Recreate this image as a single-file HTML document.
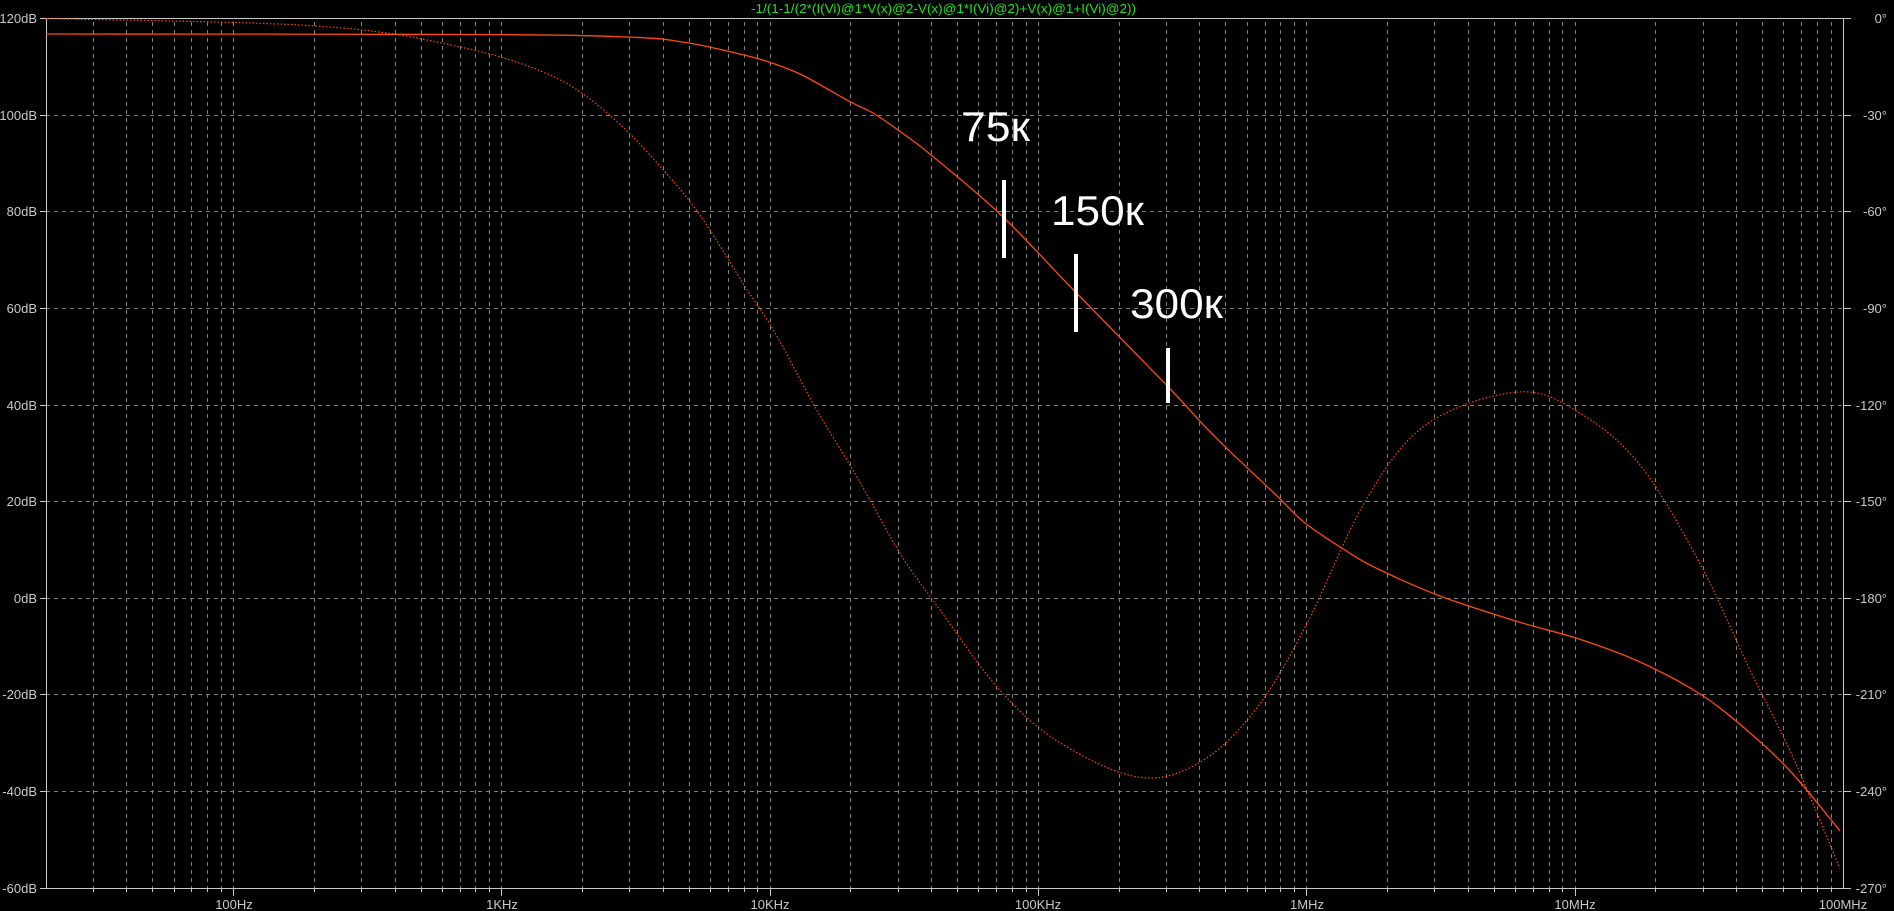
<!DOCTYPE html>
<html><head><meta charset="utf-8"><style>
html,body{margin:0;padding:0;background:#000;width:1894px;height:911px;overflow:hidden}
svg{display:block}
.l{font-family:"Liberation Sans",sans-serif;font-size:13px;fill:#c8c8c8}
.m{font-family:"Liberation Sans","DejaVu Sans",sans-serif;font-size:42px;fill:#fff}
</style></head><body>
<svg width="1894" height="911" viewBox="0 0 1894 911">
<g stroke="#808080" stroke-width="1" stroke-dasharray="4,4" fill="none" shape-rendering="crispEdges">
<path d="M93.5 22V888M126.5 22V888M152.5 22V888M174.5 22V888M191.5 22V888M207.5 22V888M221.5 22V888M233.5 22V888
M314.5 22V888M361.5 22V888M395.5 22V888M421.5 22V888M442.5 22V888M460.5 22V888M475.5 22V888M489.5 22V888M501.5 22V888
M582.5 22V888M629.5 22V888M663.5 22V888M689.5 22V888M710.5 22V888M728.5 22V888M744.5 22V888M757.5 22V888M770.5 22V888
M850.5 22V888M898.5 22V888M931.5 22V888M957.5 22V888M978.5 22V888M996.5 22V888M1012.5 22V888M1026.5 22V888M1038.5 22V888
M1119.5 22V888M1166.5 22V888M1199.5 22V888M1225.5 22V888M1247.5 22V888M1265.5 22V888M1280.5 22V888M1294.5 22V888M1306.5 22V888
M1387.5 22V888M1434.5 22V888M1468.5 22V888M1494.5 22V888M1515.5 22V888M1533.5 22V888M1549.5 22V888M1562.5 22V888M1575.5 22V888
M1655.5 22V888M1703.5 22V888M1736.5 22V888M1762.5 22V888M1783.5 22V888M1801.5 22V888M1817.5 22V888M1831.5 22V888"/>
<path d="M46 115.5H1843M46 211.5H1843M46 308.5H1843M46 405.5H1843M46 501.5H1843M46 598.5H1843M46 694.5H1843M46 791.5H1843"/>
</g>
<g stroke="#c8c8c8" stroke-width="1" fill="none" shape-rendering="crispEdges">
<path d="M40 18.5H1851M40 888.5H1851M46.5 18V888M1843.5 18V888"/>
<path d="M40 115.5H46M40 211.5H46M40 308.5H46M40 405.5H46M40 501.5H46M40 598.5H46M40 694.5H46M40 791.5H46"/>
<path d="M1843 115.5H1851M1843 211.5H1851M1843 308.5H1851M1843 405.5H1851M1843 501.5H1851M1843 598.5H1851M1843 694.5H1851M1843 791.5H1851"/>
<path d="M93.5 888V892M126.5 888V892M152.5 888V892M174.5 888V892M191.5 888V892M207.5 888V892M221.5 888V892M233.5 888V896
M314.5 888V892M361.5 888V892M395.5 888V892M421.5 888V892M442.5 888V892M460.5 888V892M475.5 888V892M489.5 888V892M501.5 888V896
M582.5 888V892M629.5 888V892M663.5 888V892M689.5 888V892M710.5 888V892M728.5 888V892M744.5 888V892M757.5 888V892M770.5 888V896
M850.5 888V892M898.5 888V892M931.5 888V892M957.5 888V892M978.5 888V892M996.5 888V892M1012.5 888V892M1026.5 888V892M1038.5 888V896
M1119.5 888V892M1166.5 888V892M1199.5 888V892M1225.5 888V892M1247.5 888V892M1265.5 888V892M1280.5 888V892M1294.5 888V892M1306.5 888V896
M1387.5 888V892M1434.5 888V892M1468.5 888V892M1494.5 888V892M1515.5 888V892M1533.5 888V892M1549.5 888V892M1562.5 888V892M1575.5 888V896
M1655.5 888V892M1703.5 888V892M1736.5 888V892M1762.5 888V892M1783.5 888V892M1801.5 888V892M1817.5 888V892M1831.5 888V892"/>
</g>
<g class="l" text-anchor="end">
<text x="37" y="23">120dB</text><text x="37" y="120">100dB</text><text x="37" y="216">80dB</text><text x="37" y="313">60dB</text>
<text x="37" y="410">40dB</text><text x="37" y="506">20dB</text><text x="37" y="603">0dB</text><text x="37" y="699">-20dB</text>
<text x="37" y="796">-40dB</text><text x="37" y="893">-60dB</text>
<text x="1887" y="23">0°</text><text x="1887" y="120">-30°</text><text x="1887" y="216">-60°</text><text x="1887" y="313">-90°</text>
<text x="1887" y="410">-120°</text><text x="1887" y="506">-150°</text><text x="1887" y="603">-180°</text><text x="1887" y="699">-210°</text>
<text x="1887" y="796">-240°</text><text x="1887" y="893">-270°</text>
</g>
<g class="l" text-anchor="middle">
<text x="234" y="909">100Hz</text><text x="502" y="909">1KHz</text><text x="770" y="909">10KHz</text><text x="1038" y="909">100KHz</text>
<text x="1307" y="909">1MHz</text><text x="1575" y="909">10MHz</text><text x="1843" y="909">100MHz</text>
</g>
<text x="751" y="13" textLength="385" lengthAdjust="spacingAndGlyphs" style="font-family:'Liberation Sans',sans-serif;font-size:13px;fill:#22e022">-1/(1-1/(2*(I(Vi)@1*V(x)@2-V(x)@1*I(Vi)@2)+V(x)@1+I(Vi)@2))</text>
<path id="mag" fill="none" stroke="#ff4a10" stroke-width="1.3" d="M46 34L480 34.5L627 37L685 42.4L744 55L771 62.7L803 75.5L850 101.7L873 113L903 133.6L932 155.7L1001 215L1074 290.5L1165 383.5L1214 435.8L1275 494L1305 523L1348 552L1378 569L1439 595.6L1518 621.7L1579 639L1640 662L1700 694L1749 732L1792 773L1840 831"/>
<path id="ph" fill="none" stroke="#ff4a10" stroke-width="1.2" stroke-dasharray="1.5,2" d="M46 18.6L216 22L316 26L392 33.7L451 45L504 58L551 75.5L586 96L627 131L662 168.5L691 203L715 238L744 285L774 331L815 407L850 465L873 505.5L903 558L940 610L1001 691.5L1062 744L1141 777.5L1202 761L1256 709L1305 627.5L1366 500L1427 424L1518 392L1579 412.5L1640 465L1700 563.6L1749 668L1792 755L1840 868.7"/>
<g fill="#fff">
<rect x="1002" y="180" width="4" height="78"/>
<rect x="1074" y="254" width="4" height="78"/>
<rect x="1166" y="348" width="4" height="55"/>
</g>
<text class="m" x="961" y="141" textLength="69" lengthAdjust="spacingAndGlyphs">75к</text>
<text class="m" x="1051" y="225" textLength="93" lengthAdjust="spacingAndGlyphs">150к</text>
<text class="m" x="1130" y="318" textLength="93" lengthAdjust="spacingAndGlyphs">300к</text>
</svg>
<script>
function smooth(id){
  var el=document.getElementById(id);
  var nums=el.getAttribute('d').replace(/[ML]/g,' ').trim().split(/[\s,]+/).map(Number);
  var p=[];for(var i=0;i<nums.length;i+=2)p.push([nums[i],nums[i+1]]);
  var d='M'+p[0][0]+' '+p[0][1];
  for(var i=0;i<p.length-1;i++){
    var p0=p[i>0?i-1:i],p1=p[i],p2=p[i+1],p3=p[i+2<p.length?i+2:i+1];
    var c1x=p1[0]+(p2[0]-p0[0])/6,c1y=p1[1]+(p2[1]-p0[1])/6;
    var c2x=p2[0]-(p3[0]-p1[0])/6,c2y=p2[1]-(p3[1]-p1[1])/6;
    d+='C'+c1x.toFixed(1)+' '+c1y.toFixed(1)+' '+c2x.toFixed(1)+' '+c2y.toFixed(1)+' '+p2[0]+' '+p2[1];
  }
  el.setAttribute('d',d);
}
smooth('mag');smooth('ph');
</script>
</body></html>
